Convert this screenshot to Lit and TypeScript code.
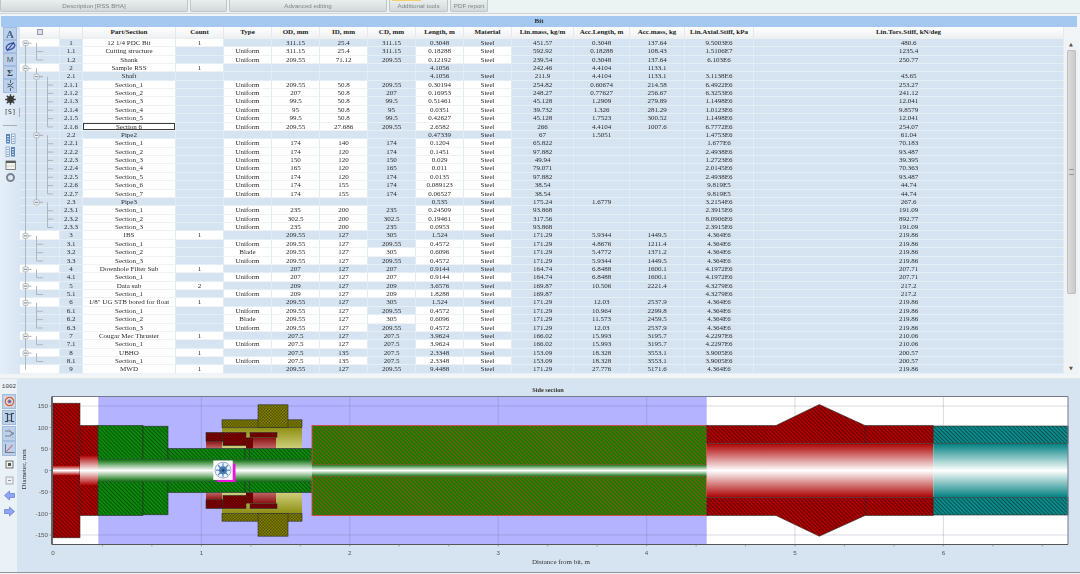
import { LitElement, html, css, svg } from 'lit';
import { customElement } from 'lit/decorators.js';

const ROW_H = 8.377;
const HEAD = ['', '', 'Part/Section', 'Count', 'Type', 'OD, mm', 'ID, mm', 'CD, mm', 'Length, m', 'Material', 'Lin.mass, kg/m', 'Acc.Length, m', 'Acc.mass, kg', 'Lin.Axial.Stiff, kPa', 'Lin.Tors.Stiff, kN/deg'];

// id|part|count|type|od|id|cd|length|material|linmass|acclen|accmass|axial|tors
const DATA = `1|12 1/4 PDC Bit|1||311.15|25.4|311.15|0.3048|Steel|451.57|0.3048|137.64|9.5003E6|480.6
1.1|Cutting structure||Uniform|311.15|25.4|311.15|0.18288|Steel|592.92|0.18288|108.43|1.5106E7|1235.4
1.2|Shank||Uniform|209.55|71.12|209.55|0.12192|Steel|239.54|0.3048|137.64|6.103E6|250.77
2|Sample RSS|1|||||4.1056||242.46|4.4104|1133.1||
2.1|Shaft||||||4.1056|Steel|211.9|4.4104|1133.1|3.1138E6|43.65
2.1.1|Section_1||Uniform|209.55|50.8|209.55|0.30194|Steel|254.82|0.60674|214.58|6.4922E6|253.27
2.1.2|Section_2||Uniform|207|50.8|207|0.16953|Steel|248.27|0.77627|256.67|6.3253E6|241.12
2.1.3|Section_3||Uniform|99.5|50.8|99.5|0.51461|Steel|45.128|1.2909|279.89|1.1498E6|12.041
2.1.4|Section_4||Uniform|95|50.8|95|0.0351|Steel|39.732|1.326|281.29|1.0123E6|9.8579
2.1.5|Section_5||Uniform|99.5|50.8|99.5|0.42627|Steel|45.128|1.7523|300.52|1.1498E6|12.041
2.1.6|Section 6||Uniform|209.55|27.686|209.55|2.6582|Steel|266|4.4104|1007.6|6.7772E6|254.07
2.2|Pipe2||||||0.47339|Steel|67|1.5051||1.4753E6|61.04
2.2.1|Section_1||Uniform|174|140|174|0.1204|Steel|65.822|||1.677E6|70.183
2.2.2|Section_2||Uniform|174|120|174|0.1451|Steel|97.882|||2.4938E6|93.487
2.2.3|Section_3||Uniform|150|120|150|0.029|Steel|49.94|||1.2723E6|39.395
2.2.4|Section_4||Uniform|165|120|165|0.011|Steel|79.071|||2.0145E6|70.363
2.2.5|Section_5||Uniform|174|120|174|0.0135|Steel|97.882|||2.4938E6|93.487
2.2.6|Section_6||Uniform|174|155|174|0.089123|Steel|38.54|||9.819E5|44.74
2.2.7|Section_7||Uniform|174|155|174|0.06527|Steel|38.54|||9.819E5|44.74
2.3|Pipe3||||||0.535|Steel|175.24|1.6779||3.2154E6|267.6
2.3.1|Section_1||Uniform|235|200|235|0.24509|Steel|93.868|||2.3915E6|191.09
2.3.2|Section_2||Uniform|302.5|200|302.5|0.19461|Steel|317.56|||8.0906E6|892.77
2.3.3|Section_3||Uniform|235|200|235|0.0953|Steel|93.868|||2.3915E6|191.09
3|IBS|1||209.55|127|305|1.524|Steel|171.29|5.9344|1449.5|4.364E6|219.86
3.1|Section_1||Uniform|209.55|127|209.55|0.4572|Steel|171.29|4.8676|1211.4|4.364E6|219.86
3.2|Section_2||Blade|209.55|127|305|0.6096|Steel|171.29|5.4772|1371.2|4.364E6|219.86
3.3|Section_3||Uniform|209.55|127|209.55|0.4572|Steel|171.29|5.9344|1449.5|4.364E6|219.86
4|Downhole Filter Sub|1||207|127|207|0.9144|Steel|164.74|6.8488|1600.1|4.1972E6|207.71
4.1|Section_1||Uniform|207|127|207|0.9144|Steel|164.74|6.8488|1600.1|4.1972E6|207.71
5|Data sub|2||209|127|209|3.6576|Steel|169.87|10.506|2221.4|4.3279E6|217.2
5.1|Section_1||Uniform|209|127|209|1.8288|Steel|169.87|||4.3279E6|217.2
6|1/8" UG STB bored for float|1||209.55|127|305|1.524|Steel|171.29|12.03|2537.9|4.364E6|219.86
6.1|Section_1||Uniform|209.55|127|209.55|0.4572|Steel|171.29|10.964|2299.8|4.364E6|219.86
6.2|Section_2||Blade|209.55|127|305|0.6096|Steel|171.29|11.573|2459.5|4.364E6|219.86
6.3|Section_3||Uniform|209.55|127|209.55|0.4572|Steel|171.29|12.03|2537.9|4.364E6|219.86
7|Cougar Mec Thruster|1||207.5|127|207.5|3.9624|Steel|166.02|15.993|3195.7|4.2297E6|210.06
7.1|Section_1||Uniform|207.5|127|207.5|3.9624|Steel|166.02|15.993|3195.7|4.2297E6|210.06
8|UBHO|1||207.5|135|207.5|2.3348|Steel|153.09|18.328|3553.1|3.9005E6|200.57
8.1|Section_1||Uniform|207.5|135|207.5|2.3348|Steel|153.09|18.328|3553.1|3.9005E6|200.57
9|MWD|1||209.55|127|209.55|9.4488|Steel|171.29|27.776|5171.6|4.364E6|219.86`
  .split('\n').map((l) => l.split('|'));

// which columns are editable (white), 0 is the tree column
function whiteCols(r: string[]) {
  const depth = r[0].split('.').length;
  if (depth === 1) return [0, 2, 3];
  if (r[3] === '') return [];
  const w = [2, 4, 5, 6, 8, 9];
  if (r[3] === 'Blade' || r[0] === '4.1' || r[0] === '5.1') w.push(7);
  return w;
}

const treeSvg = () => {
  const cy = (i: number) => (i + 0.5) * ROW_H;
  const idx = (id: string) => DATA.findIndex((r) => r[0] === id);
  const lines: any[] = [];
  const line = (x1: number, y1: number, x2: number, y2: number) =>
    lines.push(svg`<line x1=${x1} y1=${y1} x2=${x2} y2=${y2}></line>`);
  line(5.5, cy(0), 5.5, cy(DATA.length - 1));
  DATA.forEach((r, i) => {
    const parts = r[0].split('.');
    if (parts.length === 1) {
      const kids = DATA.filter((k) => k[0].split('.').length === 2 && k[0].startsWith(parts[0] + '.'));
      if (kids.length) line(16.5, cy(i), 16.5, cy(idx(kids[kids.length - 1][0])));
    } else if (parts.length === 2) {
      line(16.5, cy(i), 23, cy(i));
      const kids = DATA.filter((k) => k[0].startsWith(r[0] + '.'));
      if (kids.length) line(27.5, cy(i), 27.5, cy(idx(kids[kids.length - 1][0])));
    } else {
      line(27.5, cy(i), 33, cy(i));
    }
  });
  const boxes: any[] = [];
  DATA.forEach((r, i) => {
    const d = r[0].split('.').length;
    const hasKids = DATA.some((k) => k[0].startsWith(r[0] + '.'));
    if (d > 2 || !hasKids) return;
    const x = d === 1 ? 5.5 : 16.5;
    boxes.push(svg`<line x1=${x} y1=${cy(i)} x2=${x + 6} y2=${cy(i)}></line>
      <rect class="box" x=${x - 2.5} y=${cy(i) - 2.5} width="5" height="5" rx="1"></rect>
      <line class="minus" x1=${x - 1.5} y1=${cy(i)} x2=${x + 1.5} y2=${cy(i)}></line>`);
  });
  return html`<svg class="tree" width="40" height=${DATA.length * ROW_H}>${lines}${boxes}</svg>`;
};

// toolbar glyphs, 13x13
const ICONS: Record<string, any> = {
  ring: svg`<ellipse cx="6.5" cy="6.5" rx="4.600" ry="2.800" fill="none" stroke="#3d58b0" stroke-width="1.500" transform="rotate(-30 6.5 6.5)"></ellipse><line x1="3" y1="11" x2="10" y2="2" stroke="#2a3c7e" stroke-width="1.100"></line>`,
  split: svg`<path d="M6.5 1v3M6.5 9v3" stroke="#567" fill="none"></path><path d="M3.500 5l3 1 3-2M3.500 8l3-1 3 2" stroke="#456" fill="none"></path>`,
  gear: svg`<circle cx="6.5" cy="6.5" r="3.400" fill="#3a3a3a"></circle><circle cx="6.5" cy="6.5" r="1.200" fill="#c4c4c4"></circle><path d="M6.5 1.200v10.600M1.200 6.5h10.600M2.800 2.800l7.400 7.400M10.200 2.800l-7.400 7.400" stroke="#3a3a3a" stroke-width="1.300"></path>`,
  panel1: svg`<rect x="2" y="2" width="4" height="9.500" fill="#5a86b8"></rect><rect x="7.500" y="2" width="3.500" height="9.500" fill="#f4f7fb" stroke="#6b93c0" stroke-width=".7"></rect><path d="M3 4.500h2M3 7h2M3 9.500h2" stroke="#fff" stroke-width=".8"></path><path d="M8.300 4.500h2M8.300 7h2M8.300 9.500h2" stroke="#5a86b8" stroke-width=".8"></path>`,
  panel2: svg`<rect x="2" y="2" width="3.500" height="9.500" fill="#f4f7fb" stroke="#6b93c0" stroke-width=".7"></rect><rect x="7" y="2" width="4" height="9.500" fill="#5a86b8"></rect><path d="M2.800 4.500h2M2.800 7h2M2.800 9.500h2" stroke="#5a86b8" stroke-width=".8"></path><path d="M8 4.500h2M8 7h2M8 9.500h2" stroke="#fff" stroke-width=".8"></path>`,
  cal: svg`<rect x="2" y="3" width="9.500" height="8.500" fill="#f2f2ec" stroke="#666" stroke-width=".8"></rect><rect x="2" y="3" width="9.500" height="2" fill="#5c5c5c"></rect><path d="M2 8h9.500" stroke="#c4c4c4" stroke-width=".7"></path>`,
  disc: svg`<circle cx="6.5" cy="6.5" r="3.500" fill="none" stroke="#7c8494" stroke-width="2"></circle><circle cx="6.5" cy="6.5" r="1.100" fill="#e0e4ea"></circle>`,
  target: svg`<rect x="1.500" y="1.500" width="10" height="10" fill="#e8d8c8"></rect><circle cx="6.5" cy="6.5" r="4.200" fill="none" stroke="#c86058" stroke-width="1.200"></circle><circle cx="6.5" cy="6.5" r="2" fill="#6f88bc"></circle><circle cx="6.5" cy="6.5" r=".8" fill="#c03030"></circle>`,
  beam: svg`<path d="M2 2.500h3l1.500 1.500 1.500-1.500h3M2 10.500h3l1.500-1.500 1.500 1.500h3" fill="none" stroke="#345" stroke-width="1"></path><path d="M4.500 3v7M8.500 3v7" stroke="#345" stroke-width="1.200"></path>`,
  wave: svg`<path d="M2 4h5l2 2h2M2 9h5l2-2h2" fill="none" stroke="#7c8294" stroke-width="1.100"></path><path d="M6 2l1 2M9 9l1 2" stroke="#9a9fb4" stroke-width=".8"></path>`,
  axis: svg`<path d="M2.500 2v8.500h9" fill="none" stroke="#567" stroke-width=".8"></path><line x1="3.500" y1="9.500" x2="9.500" y2="3" stroke="#e04050" stroke-width="1"></line>`,
  sq1: svg`<rect x="3" y="3" width="7" height="7" fill="#eee" stroke="#555" stroke-width=".8"></rect><rect x="5" y="5" width="3" height="3" fill="#555"></rect>`,
  sq2: svg`<rect x="3" y="3" width="7" height="7" fill="#eef1f4" stroke="#99a" stroke-width=".8"></rect><line x1="5" y1="6.500" x2="8" y2="6.500" stroke="#778" stroke-width=".8"></line>`,
  left: svg`<path d="M1.500 6.500L6.500 2v2.500H11.500v4H6.500V11z" fill="#8fa6f2" stroke="#5b78d8" stroke-width=".7"></path>`,
  right: svg`<path d="M11.500 6.500L6.500 2v2.500H1.500v4h5V11z" fill="#8fa6f2" stroke="#5b78d8" stroke-width=".7"></path>`,
};

const icon = (n: string) => html`<svg width="13" height="13" viewBox="0 0 13 13">${ICONS[n]}</svg>`;

// chart helpers, all in page pixels through the svg viewBox
const MID = 470;
const rect = (x1: number, x2: number, y1: number, y2: number, fill: string, cls = '') =>
  svg`<rect class=${cls} x=${x1} y=${y1} width=${x2 - x1} height=${y2 - y1} fill=${fill}></rect>`;
const pair = (x1: number, x2: number, y1: number, y2: number, fill: string, cls = 'edge', fill2?: string) => [
  rect(x1, x2, y1, y2, fill, cls),
  rect(x1, x2, 2 * MID - y2, 2 * MID - y1, fill2 ?? fill, cls),
];

const chart = () => {
  const xTicks = [0, 1, 2, 3, 4, 5, 6];
  const xAt = (v: number) => 53 + v * 148.4;
  const yAt = (v: number) => MID - v * 0.43;
  const minor: number[] = [];
  for (let i = 1; i < 21; i++) minor.push(xAt(i / 3));
  return html`<svg class="chart" width="1063" height="193" viewBox="17 378.5 1063 193">
    <defs>
      ${[['hRed', '#b00000', '#5c0000', 0.9], ['hGreen', '#0d8a0d', '#055205', 0.9], ['hLong', '#0f8000', '#a8481a', 0.8], ['hTeal', '#0b8c8c', '#064a4a', 0.9]].map(
        ([id, a, b, w]) => svg`<pattern id=${id} width="2.800" height="2.800" patternUnits="userSpaceOnUse" patternTransform="rotate(-45)">
          <rect width="2.800" height="2.800" fill=${a}></rect><rect width=${w} height="2.800" fill=${b}></rect></pattern>`)}
      ${[['cOlive', '#9a9a00', '#3a3a00'], ['cRed', '#a80000', '#340000']].map(
        ([id, a, b]) => svg`<pattern id=${id} width="3" height="3" patternUnits="userSpaceOnUse">
          <rect width="3" height="3" fill=${a}></rect><rect width="1.500" height="1.500" fill=${b}></rect><rect x="1.500" y="1.500" width="1.500" height="1.500" fill=${b}></rect></pattern>`)}
      ${[['gRed', '#ac0000'], ['gGreen', '#0a700a'], ['gTeal', '#008080']].map(
        ([id, c]) => svg`<linearGradient id=${id} x1="0" y1="0" x2="0" y2="1">
          <stop offset="0" stop-color=${c}></stop><stop offset=".5" stop-color="#fff"></stop><stop offset="1" stop-color=${c}></stop></linearGradient>`)}
      <linearGradient id="gOlive" x1="0" y1="0" x2="0" y2="1"><stop offset="0" stop-color="#8e8e12"></stop><stop offset="1" stop-color="#cfcf7e"></stop></linearGradient>
      <linearGradient id="gOlive2" x1="0" y1="1" x2="0" y2="0"><stop offset="0" stop-color="#8e8e12"></stop><stop offset="1" stop-color="#cfcf7e"></stop></linearGradient>
      <linearGradient id="gDark" x1="0" y1="0" x2="0" y2="1"><stop offset="0" stop-color="#8c1010"></stop><stop offset="1" stop-color="#c06868"></stop></linearGradient>
      <linearGradient id="gDark2" x1="0" y1="1" x2="0" y2="0"><stop offset="0" stop-color="#8c1010"></stop><stop offset="1" stop-color="#c06868"></stop></linearGradient>
    </defs>

    <text class="title" x="548" y="391" text-anchor="middle">Side section</text>

    <rect x="52" y="396" width="1016" height="148" fill="#fff"></rect>
    <rect x="98.300" y="396" width="608.400" height="148" fill="#b3b3ff"></rect>
    ${xTicks.slice(1).map((v) => svg`<line class="grid" x1=${xAt(v)} y1="396" x2=${xAt(v)} y2="544"></line>`)}
    ${[150, -150].map((v) => svg`<line class="grid" x1="52" y1=${yAt(v)} x2="1068" y2=${yAt(v)}></line>`)}

    <!-- bit -->
    ${rect(53, 80, 402.7, 537.3, 'url(#hRed)', 'edge')}
    ${rect(53, 80, 465, 475, 'url(#gRed)')}
    ${rect(80, 98, 425, 515, 'url(#hRed)', 'edge')}
    ${rect(80, 98, 455, 485, 'url(#gRed)')}

    <!-- olive sleeve -->
    ${pair(222, 302, 427, 448, 'url(#gOlive)', '', 'url(#gOlive2)')}
    ${pair(222, 302, 419.3, 427, 'url(#cOlive)')}
    ${pair(258, 288, 404.3, 427, 'url(#cOlive)')}

    <!-- red sleeve -->
    ${pair(206, 222, 440.7, 448, 'url(#gDark)', '', 'url(#gDark2)')}
    ${pair(253, 276, 437, 448, 'url(#gDark)', '', 'url(#gDark2)')}
    ${pair(246, 253, 437, 448, 'url(#cRed)', '')}
    ${pair(206, 223, 432, 440.7, 'url(#cRed)')}
    ${pair(223, 246, 432, 445, 'url(#cRed)')}
    ${pair(250, 277, 432, 436.7, 'url(#cRed)')}

    <!-- shaft -->
    ${pair(98, 143, 425, 459, 'url(#hGreen)')}
    ${pair(143, 168, 425.7, 459, 'url(#hGreen)')}
    ${pair(168, 245, 448, 459, 'url(#hGreen)')}
    ${pair(245, 249.5, 448, 459, 'url(#hGreen)')}
    ${pair(249.5, 312, 448, 459, 'url(#hGreen)')}
    ${rect(98, 312, 459, 481, 'url(#gGreen)')}

    <!-- pipe2 -->
    ${pair(312, 706.7, 425, 464, 'url(#hLong)', 'edgeRed')}
    ${rect(312, 706.7, 464, 476, 'url(#gGreen)')}

    <!-- pipe3 -->
    ${rect(706.7, 933.3, 443, 497, 'url(#gRed)')}
    <path class="edge" fill="url(#hRed)" d="M706.700 425H776L819.300 404 865 425H933.300V443H706.700Z"></path>
    <path class="edge" fill="url(#hRed)" d="M706.700 515H776L819.300 535.700 865 515H933.300V497H706.700Z"></path>
    <line class="edge" x1="865" y1="425" x2="865" y2="443"></line>
    <line class="edge" x1="865" y1="497" x2="865" y2="515"></line>

    <!-- ibs -->
    ${rect(933.3, 1068, 443, 497, 'url(#gTeal)')}
    ${pair(933.3, 1068, 425.5, 443, 'url(#hTeal)')}

    <!-- drag handle -->
    <rect x="217" y="463" width="18.500" height="18.500" fill="#f010e0"></rect>
    <rect x="213.300" y="460" width="19.400" height="19.400" fill="#fff"></rect>
    <circle cx="223" cy="469.700" r="8" fill="#eef3fa" stroke="#8496b8" stroke-width=".8"></circle>
    ${[0, 45, 90, 135].map((a) => svg`<line x1="223" y1="462.700" x2="223" y2="476.700" stroke="#3f82cc" stroke-width="1.100" transform="rotate(${a} 223 469.700)"></line>`)}
    <circle cx="223" cy="469.700" r="4" fill="#4a78b0"></circle>
    <circle cx="223" cy="469.700" r="1.500" fill="#24486f"></circle>

    <!-- axes -->
    <path class="frame" d="M52 396H1068V544"></path>
    <line x1="52" y1="396" x2="52" y2="544" stroke="#333" stroke-width="1.400"></line>
    <line x1="52" y1="544" x2="1068" y2="544" stroke="#555" stroke-width="1.200"></line>
    ${[150, 100, 50, 0, -50, -100, -150].map((v) => svg`
      <line class="tick" x1="49.500" x2="52" y1=${yAt(v)} y2=${yAt(v)}></line>
      <text class="num" x="48" y=${yAt(v) + 2.300} text-anchor="end">${v}</text>`)}
    ${minor.map((x) => svg`<line class="tick" x1=${x} x2=${x} y1="544" y2="545.800"></line>`)}
    ${xTicks.map((v) => svg`<text class="num" x=${xAt(v)} y="554.500" text-anchor="middle">${v}</text>`)}
    <text class="lab" x="561" y="563" text-anchor="middle">Distance from bit, m</text>
    <text class="lab" transform="translate(26 469) rotate(-90)" text-anchor="middle">Diameter, mm</text>
  </svg>`;
};

@customElement('app-root')
export class AppRoot extends LitElement {
  static styles = css`
    :host {
      display: block;
      width: 1080px;
      height: 574px;
      overflow: hidden;
      background: #f1f5f7;
      font-family: 'Liberation Serif', serif;
      font-size: 7px;
      color: #2b2b2b;
    }
    .page { filter: blur(0.3px); height: 574px; }

    .tabs {
      display: flex;
      gap: 2px;
      height: 12px;
      padding-bottom: 1px;
      border-bottom: 1px solid #cfd3d5;
      background: #ecf3f3;
      font-family: 'Liberation Sans', sans-serif;
      font-size: 6.200px;
      color: #7e8488;
    }
    .tab {
      position: relative;
      display: flex;
      align-items: center;
      justify-content: center;
      box-sizing: border-box;
      height: 12px;
      background: linear-gradient(#eaeeee, #d3d9da);
      border: 1px solid #c0c5c8;
      border-top: none;
      border-radius: 0 0 2px 2px;
    }
    .tab.hot::before {
      content: '';
      position: absolute;
      left: 2px;
      top: 0;
      width: 29px;
      height: 1px;
      background: #f4d070;
    }

    .title {
      height: 11px;
      margin: 2px 3px 0 1px;
      background: #a4c8ef;
      text-align: center;
      font-weight: bold;
      line-height: 11px;
    }

    .main { display: flex; height: 346.900px; }
    .strip { display: flex; flex-direction: column; box-sizing: border-box; background: linear-gradient(90deg, #e6eff8, #d8e5f3); }
    .strip.top { width: 20px; padding: 0 0 0 3px; }
    .strip.low { width: 17px; padding-left: 2px; height: 193px; background: #eaf1f7; }
    .tool {
      display: flex;
      align-items: center;
      justify-content: center;
      box-sizing: border-box;
      width: 14px;
      height: 13.120px;
      font-size: 11px;
      font-weight: bold;
      color: #44628a;
    }
    .tool.on { background: #bdd0ea; box-shadow: inset 0 0 0 1px #a3bbdd; }
    .tool.m { font-size: 8px; color: #556; font-family: 'Liberation Sans', sans-serif; font-weight: normal; }
    .tool.sig { font-size: 9px; color: #345; }
    .tool.s { font-size: 6.500px; color: #333; font-family: 'DejaVu Sans Mono', monospace; font-weight: normal; position: relative; }
    .tool.s::after { content: ''; position: absolute; right: -3px; top: 2px; height: 9px; width: 1px; background: #aab; }
    .sep { display: flex; align-items: center; width: 14px; height: 13.120px; }
    .sep i { display: block; width: 100%; height: 1px; background: #a8aeb4; }
    .low .tool { height: 15.600px; }
    .low .tool.on { height: 15px; margin-bottom: 0.600px; }
    .zoom { display: flex; align-items: center; justify-content: center; width: 14px; height: 15px; font: 6px 'Liberation Mono', monospace; color: #444; }

    .gridwrap { position: relative; width: 1044px; }
    .row {
      display: grid;
      grid-template-columns: 40px 23px 93px 48px 48px 48px 48px 48px 48px 48px 62px 56px 55px 69px 310px;
      height: 8.377px;
      line-height: 8.377px;
      white-space: nowrap;
    }
    .row.head { height: 11.800px; line-height: 11.800px; font-weight: bold; color: #222; background: linear-gradient(#fff, #eceff1); }
    .head div { text-align: center; border-right: 1px solid #e6e9ec; }
    .cell {
      box-sizing: border-box;
      text-align: center;
      background: #d6e4f2;
      border-right: 1px solid #e3ecf5;
      border-bottom: 1px solid #e6eef6;
      overflow: hidden;
    }
    .cell.white { background: #fff; border-bottom-color: #f0f2f4; }
    .cell.sel { box-shadow: inset 0 0 0 1px #3d3d3d; background: #fff; }
    .ul .cell span { text-decoration: underline; }
    .body { position: relative; }
    .tree { position: absolute; left: 0; top: 0; }
    .tree line { stroke: #aeb6be; stroke-width: 1; }
    .tree .box { fill: #f2f4f6; stroke: #a6aeb6; stroke-width: 0.8; }
    .tree .minus { stroke: #7c848c; }
    .headbox {
      display: inline-block;
      box-sizing: border-box;
      width: 6px;
      height: 6px;
      background: linear-gradient(#dfe2e5, #dfe2e5) no-repeat center / 100% 100%;
      border: 1px solid #99a;
      box-shadow: inset 0 0 0 1px #dfe2e5;
      vertical-align: -1px;
    }

    .scroll {
      position: relative;
      width: 14px;
      margin-top: 11.800px;
      background: #f0f3f4;
      display: flex;
      flex-direction: column;
      align-items: center;
      color: #555;
      font: 5px 'DejaVu Sans', sans-serif;
    }
    .arrow { height: 11px; line-height: 11px; }
    .thumb {
      display: flex;
      align-items: center;
      justify-content: center;
      box-sizing: border-box;
      width: 9px;
      height: 244px;
      background: linear-gradient(90deg, #dcdcdc, #cacaca);
      border: 1px solid #c0c0c0;
      border-radius: 1px;
    }
    .thumb i { display: block; width: 5px; height: 4px; border-top: 1px solid #999; border-bottom: 1px solid #999; }
    .spacer { flex: 1; }

    .lower { display: flex; margin-top: 4.500px; height: 193px; border-top: 1px solid #e2e6e8; border-bottom: 1px solid #90969a; box-sizing: content-box; }
    .panel { width: 1063px; height: 193px; background: #d6e4f1; }
    .chart { display: block; }
    .chart .title { font: bold 6.300px 'Liberation Serif', serif; fill: #333; }
    .chart .lab { font: 7px 'Liberation Serif', serif; fill: #333; }
    .chart .num { font: 6.200px 'Liberation Sans', sans-serif; fill: #555; }
    .chart .edge { stroke: #2e2e2e; stroke-width: 0.6; }
    .chart .edgeRed { stroke: #d24a4a; stroke-width: 0.9; }
    .chart .grid { stroke: rgba(90, 90, 130, 0.22); stroke-width: 1; }
    .chart .tick { stroke: #777; stroke-width: 0.7; }
    .chart .frame { fill: none; stroke: #77798e; stroke-width: 1; }
  `;

  private renderRow(r: string[]) {
    const white = whiteCols(r);
    const sel = r[0] === '2.1.6';
    return html`<div class="row ${sel ? 'ul' : ''}">
      <div class="cell ${white.includes(0) ? 'white' : ''}"></div>
      ${r.map((v, i) => {
        const col = i + 1;
        const isSel = sel && col === 2;
        return html`<div class="cell ${white.includes(col) ? 'white' : ''} ${isSel ? 'sel' : ''}">${isSel ? v : html`<span>${v}</span>`}</div>`;
      })}
    </div>`;
  }

  render() {
    return html`<div class="page">
      <div class="tabs">
        <div class="tab" style="width:188px">Description [RSS BHA]</div>
        <div class="tab" style="width:37px"></div>
        <div class="tab" style="width:158px">Advanced editing</div>
        <div class="tab hot" style="width:59px">Additional tools</div>
        <div class="tab" style="width:38px">PDF report</div>
      </div>
      <div class="title">Bit</div>
      <div class="main">
        <div class="strip top">
          <div class="tool on">A</div>
          <div class="tool on">${icon('ring')}</div>
          <div class="tool on m">M</div>
          <div class="tool on sig">Σ</div>
          <div class="tool on">${icon('split')}</div>
          <div class="tool">${icon('gear')}</div>
          <div class="tool s">[S]</div>
          <div class="sep"><i></i></div>
          <div class="tool">${icon('panel1')}</div>
          <div class="tool">${icon('panel2')}</div>
          <div class="tool">${icon('cal')}</div>
          <div class="tool">${icon('disc')}</div>
        </div>
        <div class="gridwrap">
          <div class="row head">
            ${HEAD.map((h, i) => html`<div>${i === 0 ? html`<span class="headbox"></span>` : h}</div>`)}
          </div>
          <div class="body">
            ${DATA.map((r) => this.renderRow(r))}
            ${treeSvg()}
          </div>
        </div>
        <div class="scroll">
          <div class="arrow">▲</div>
          <div class="thumb"><i></i></div>
          <div class="spacer"></div>
          <div class="arrow">▼</div>
        </div>
      </div>
      <div class="lower">
        <div class="strip low">
          <div class="zoom">1002</div>
          <div class="tool on">${icon('target')}</div>
          <div class="tool on">${icon('beam')}</div>
          <div class="tool on">${icon('wave')}</div>
          <div class="tool on">${icon('axis')}</div>
          <div class="tool">${icon('sq1')}</div>
          <div class="tool">${icon('sq2')}</div>
          <div class="tool">${icon('left')}</div>
          <div class="tool">${icon('right')}</div>
        </div>
        <div class="panel">${chart()}</div>
      </div>
    </div>`;
  }
}
